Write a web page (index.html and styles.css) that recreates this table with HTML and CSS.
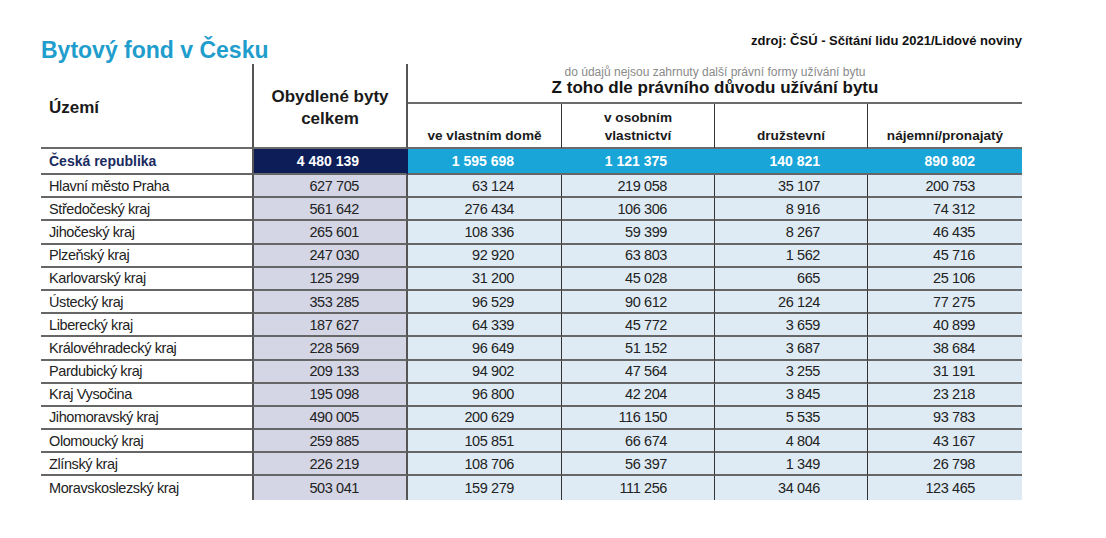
FILE: index.html
```html
<!DOCTYPE html>
<html lang="cs">
<head>
<meta charset="utf-8">
<title>Bytový fond v Česku</title>
<link rel="stylesheet" href="styles.css">
</head>
<body>
<div class="page">
  <header class="top">
    <h1 class="title">Bytový fond v Česku</h1>
    <p class="source">zdroj: ČSÚ - Sčítání lidu 2021/Lidové noviny</p>
  </header>

  <div class="table">
    <div class="h h-name">Území</div>
    <div class="h h-total">Obydlené byty<br>celkem</div>
    <div class="h h-group">
      <span class="note">do údajů nejsou zahrnuty další právní formy užívání bytu</span>
      <span class="group-title">Z toho dle právního důvodu užívání bytu</span>
    </div>
    <div class="h sub">ve vlastním domě</div>
    <div class="h sub div">v osobním<br>vlastnictví</div>
    <div class="h sub div">družstevní</div>
    <div class="h sub div">nájemní/pronajatý</div>

    <div class="row cr">
      <div class="c name">Česká republika</div>
      <div class="c total">4 480 139</div>
      <div class="c val">1 595 698</div>
      <div class="c val">1 121 375</div>
      <div class="c val">140 821</div>
      <div class="c val">890 802</div>
    </div>
    <div class="row">
      <div class="c name">Hlavní město Praha</div>
      <div class="c total">627 705</div>
      <div class="c val">63 124</div>
      <div class="c val div">219 058</div>
      <div class="c val div">35 107</div>
      <div class="c val div">200 753</div>
    </div>
    <div class="row">
      <div class="c name">Středočeský kraj</div>
      <div class="c total">561 642</div>
      <div class="c val">276 434</div>
      <div class="c val div">106 306</div>
      <div class="c val div">8 916</div>
      <div class="c val div">74 312</div>
    </div>
    <div class="row">
      <div class="c name">Jihočeský kraj</div>
      <div class="c total">265 601</div>
      <div class="c val">108 336</div>
      <div class="c val div">59 399</div>
      <div class="c val div">8 267</div>
      <div class="c val div">46 435</div>
    </div>
    <div class="row">
      <div class="c name">Plzeňský kraj</div>
      <div class="c total">247 030</div>
      <div class="c val">92 920</div>
      <div class="c val div">63 803</div>
      <div class="c val div">1 562</div>
      <div class="c val div">45 716</div>
    </div>
    <div class="row">
      <div class="c name">Karlovarský kraj</div>
      <div class="c total">125 299</div>
      <div class="c val">31 200</div>
      <div class="c val div">45 028</div>
      <div class="c val div">665</div>
      <div class="c val div">25 106</div>
    </div>
    <div class="row">
      <div class="c name">Ústecký kraj</div>
      <div class="c total">353 285</div>
      <div class="c val">96 529</div>
      <div class="c val div">90 612</div>
      <div class="c val div">26 124</div>
      <div class="c val div">77 275</div>
    </div>
    <div class="row">
      <div class="c name">Liberecký kraj</div>
      <div class="c total">187 627</div>
      <div class="c val">64 339</div>
      <div class="c val div">45 772</div>
      <div class="c val div">3 659</div>
      <div class="c val div">40 899</div>
    </div>
    <div class="row">
      <div class="c name">Královéhradecký kraj</div>
      <div class="c total">228 569</div>
      <div class="c val">96 649</div>
      <div class="c val div">51 152</div>
      <div class="c val div">3 687</div>
      <div class="c val div">38 684</div>
    </div>
    <div class="row">
      <div class="c name">Pardubický kraj</div>
      <div class="c total">209 133</div>
      <div class="c val">94 902</div>
      <div class="c val div">47 564</div>
      <div class="c val div">3 255</div>
      <div class="c val div">31 191</div>
    </div>
    <div class="row">
      <div class="c name">Kraj Vysočina</div>
      <div class="c total">195 098</div>
      <div class="c val">96 800</div>
      <div class="c val div">42 204</div>
      <div class="c val div">3 845</div>
      <div class="c val div">23 218</div>
    </div>
    <div class="row">
      <div class="c name">Jihomoravský kraj</div>
      <div class="c total">490 005</div>
      <div class="c val">200 629</div>
      <div class="c val div">116 150</div>
      <div class="c val div">5 535</div>
      <div class="c val div">93 783</div>
    </div>
    <div class="row">
      <div class="c name">Olomoucký kraj</div>
      <div class="c total">259 885</div>
      <div class="c val">105 851</div>
      <div class="c val div">66 674</div>
      <div class="c val div">4 804</div>
      <div class="c val div">43 167</div>
    </div>
    <div class="row">
      <div class="c name">Zlínský kraj</div>
      <div class="c total">226 219</div>
      <div class="c val">108 706</div>
      <div class="c val div">56 397</div>
      <div class="c val div">1 349</div>
      <div class="c val div">26 798</div>
    </div>
    <div class="row">
      <div class="c name">Moravskoslezský kraj</div>
      <div class="c total">503 041</div>
      <div class="c val">159 279</div>
      <div class="c val div">111 256</div>
      <div class="c val div">34 046</div>
      <div class="c val div">123 465</div>
    </div>
  </div>
</div>
</body>
</html>
```

FILE: styles.css
```css
* { box-sizing: border-box; }

html, body {
  margin: 0;
  padding: 0;
  background: #ffffff;
}

body {
  font-family: "Liberation Sans", Arial, sans-serif;
  color: #222222;
}

.page {
  width: 981px;
  margin-left: 41px;
}

.top {
  display: flex;
  justify-content: space-between;
  align-items: flex-start;
  height: 64px;
}

.title {
  margin: 37px 0 0 0;
  font-size: 23px;
  line-height: 26px;
  font-weight: 700;
  color: #1f9dcc;
}

.source {
  margin: 33px 0 0 0;
  font-size: 13px;
  line-height: 16px;
  font-weight: 700;
  color: #111111;
}

.table {
  display: grid;
  grid-template-columns: 211px 156px 153px 153px 153px 155px;
  grid-template-rows: 40px 45px 26px repeat(14, 23.2px);
}

.row { display: contents; }

/* header */
.h {
  border-bottom: 2px solid #6a6a6a;
  color: #1a1a1a;
  font-weight: 700;
}

.h-name {
  grid-row: 1 / 3;
  grid-column: 1;
  display: flex;
  align-items: center;
  padding: 4px 0 0 8px;
  font-size: 17px;
}

.h-total {
  grid-row: 1 / 3;
  grid-column: 2;
  display: flex;
  align-items: center;
  justify-content: center;
  text-align: center;
  padding-top: 4px;
  font-size: 17px;
  line-height: 21.5px;
  border-left: 2px solid #555555;
  border-right: 2px solid #555555;
}

.h-group {
  grid-row: 1;
  grid-column: 3 / 7;
  display: flex;
  flex-direction: column;
  align-items: center;
  padding-top: 1px;
}

.note {
  font-size: 12px;
  line-height: 14px;
  font-weight: 400;
  color: #8a8a8a;
}

.group-title {
  font-size: 17px;
  line-height: 18px;
  color: #151515;
}

.sub {
  display: flex;
  align-items: flex-end;
  justify-content: center;
  text-align: center;
  padding-bottom: 2px;
  font-size: 13.6px;
  line-height: 18px;
}

.sub.div { border-left: 1px solid #333333; }

/* body cells */
.c {
  display: flex;
  align-items: center;
  white-space: nowrap;
  font-size: 14.5px;
  letter-spacing: -0.4px;
  line-height: 20px;
  border-bottom: 2px solid #666666;
}

.row:last-child .c { border-bottom: none; }

.name {
  padding-left: 8px;
  background: #ffffff;
}

.total {
  justify-content: flex-end;
  padding-right: 47px;
  background: #d4d5e5;
  border-left: 2px solid #555555;
  border-right: 2px solid #555555;
}

.val {
  justify-content: flex-end;
  padding-right: 47px;
  background: #deebf5;
}

.val.div { border-left: 1px solid #333333; }

/* Czech Republic summary row */
.cr .c {
  font-weight: 700;
  font-size: 14px;
  letter-spacing: 0;
}

.cr .name { color: #1a2b5f; }

.cr .total {
  background: #0c1d58;
  color: #ffffff;
  border-right-color: #0c1d58;
}

.cr .val {
  background: #1aa5d9;
  color: #ffffff;
}
```
